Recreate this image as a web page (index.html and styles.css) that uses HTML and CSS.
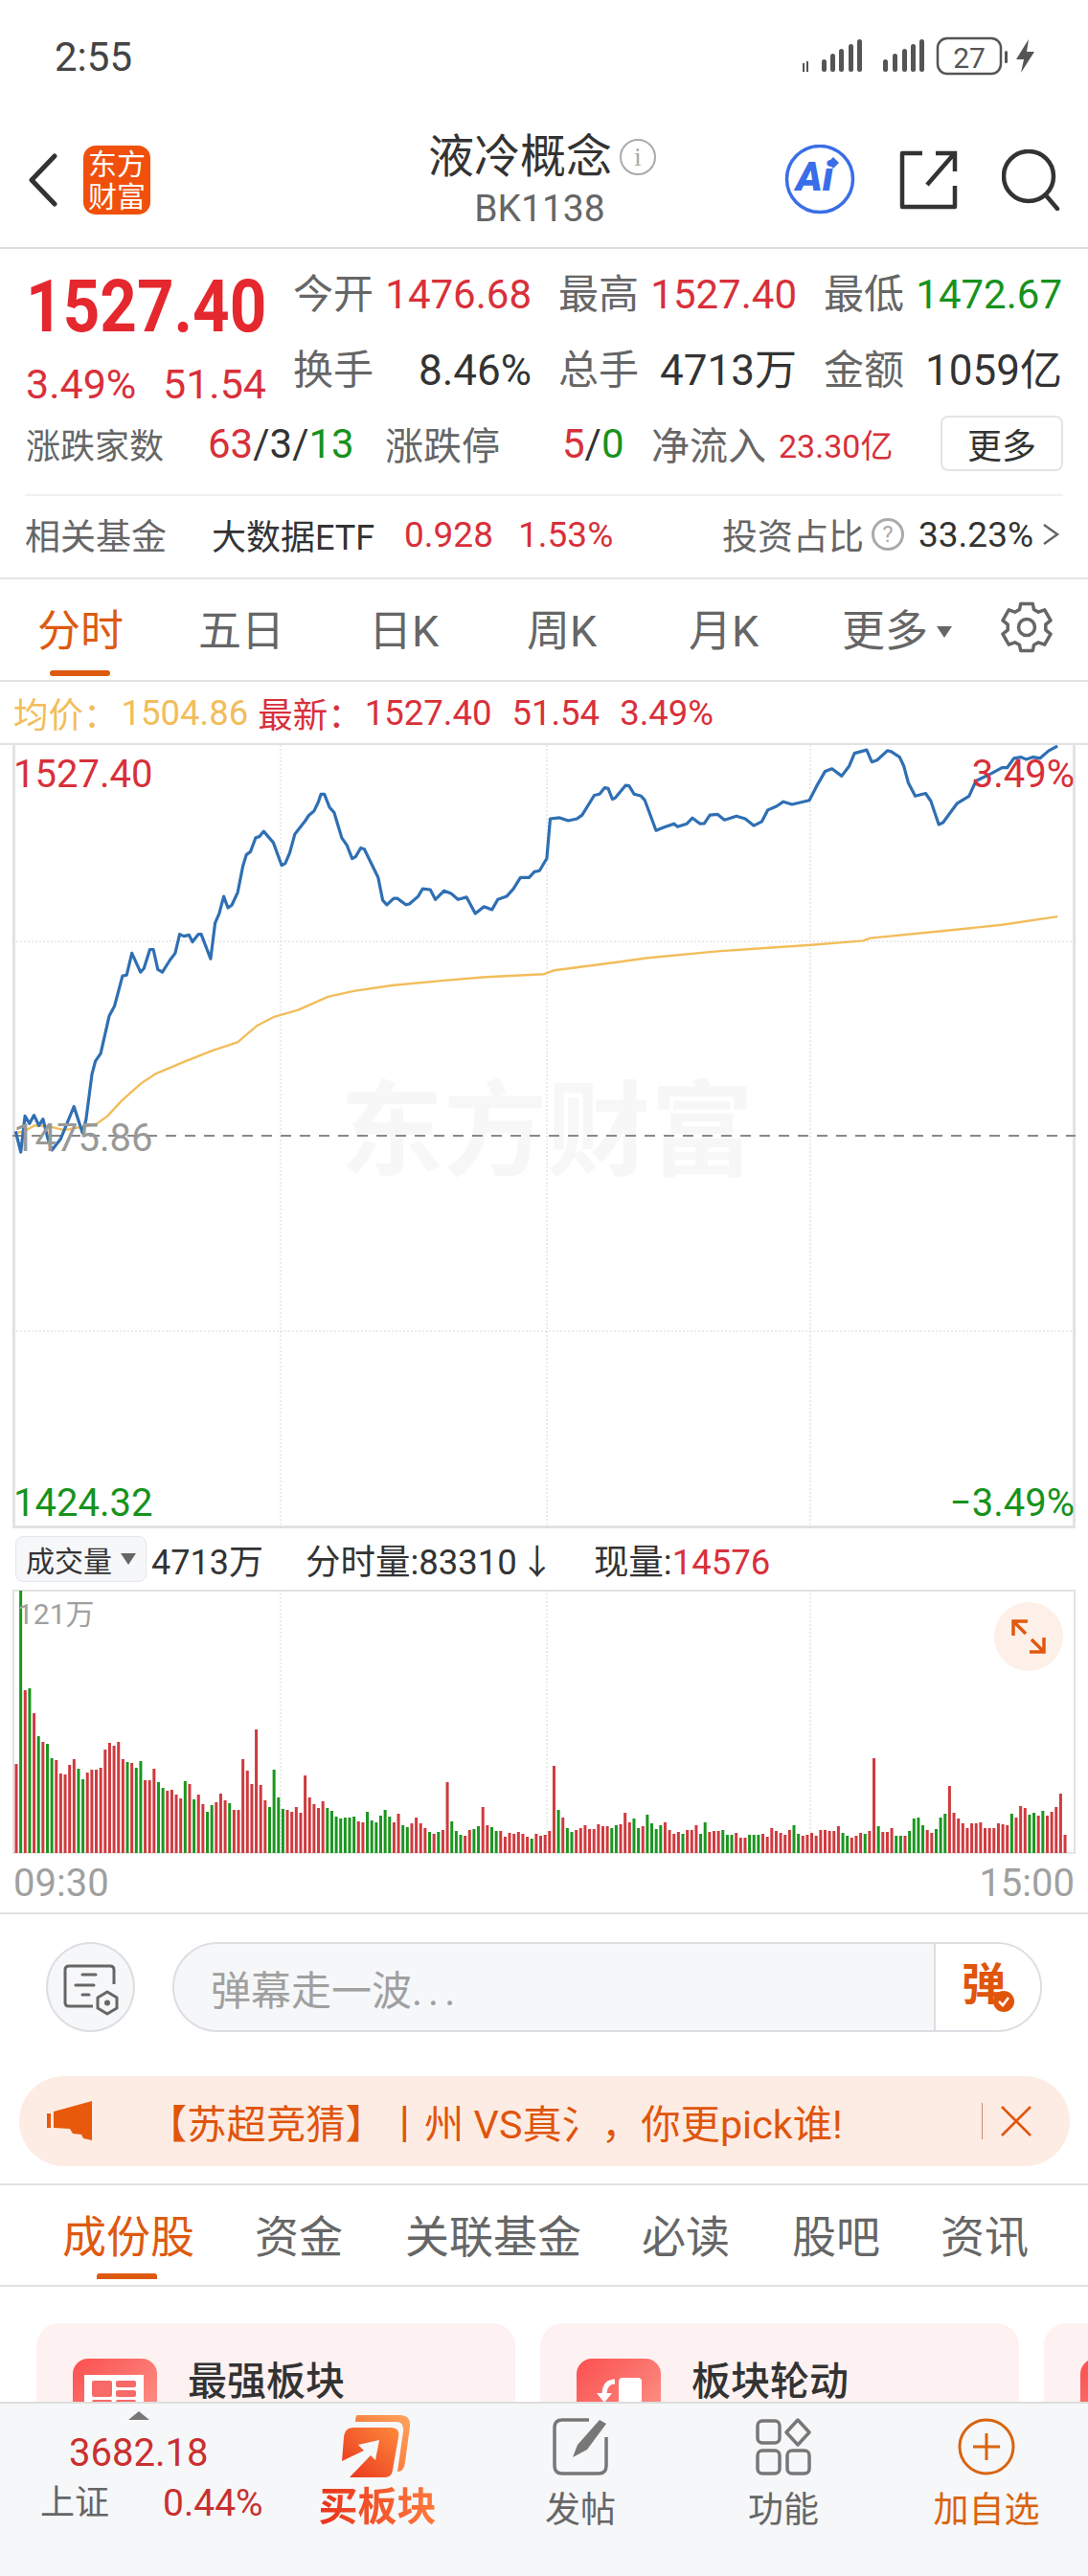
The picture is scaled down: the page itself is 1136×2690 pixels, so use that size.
FILE: index.html
```html
<!DOCTYPE html>
<html lang="zh-CN">
<head>
  <meta charset="UTF-8">
  <title>液冷概念 BK1138</title>
  <link rel="stylesheet" href="styles.css">
</head>
<body>

  <div class="statusbar">
    <span class="clock">2:55</span>
    <svg class="status-icons" width="243" height="42" viewBox="837 38 243 42">
      <g fill="#555">
        <rect x="838" y="66" width="2" height="9"/><rect x="842" y="64" width="2" height="11"/>
        <rect x="858" y="62" width="5" height="13" rx="2.5"/><rect x="867" y="56" width="5" height="19" rx="2.5"/>
        <rect x="876" y="51" width="5" height="24" rx="2.5"/><rect x="886" y="46" width="5" height="29" rx="2.5"/>
        <rect x="895" y="41" width="5" height="34" rx="2.5"/>
        <rect x="922" y="62" width="5" height="13" rx="2.5"/><rect x="932" y="56" width="5" height="19" rx="2.5"/>
        <rect x="942" y="51" width="5" height="24" rx="2.5"/><rect x="951" y="46" width="5" height="29" rx="2.5"/>
        <rect x="960" y="41" width="5" height="34" rx="2.5"/>
        <rect x="1049" y="53" width="3" height="13" rx="1.5"/>
        <path d="M1074 41 L1061 62 H1069 L1066 76 L1080 54 H1072 Z"/>
      </g>
      <rect x="979" y="40" width="66" height="37" rx="10" fill="none" stroke="#555" stroke-width="2.5"/>
      <text x="1012" y="71" class="battery-text" text-anchor="middle">27</text>
    </svg>
  </div>

  <div class="navbar">
    <svg class="back" width="31" height="56" viewBox="0 0 31 56"><path d="M28 3 L4 28 L28 53" fill="none" stroke="#333" stroke-width="5" stroke-linecap="round" stroke-linejoin="round"/></svg>
    <div class="logo">东方<br>财富</div>
    <div class="nav-title">
      <div class="title-line"><h1>液冷概念</h1><span class="info-dot">i</span></div>
      <div class="code">BK1138</div>
    </div>
    <svg class="ai" width="74" height="74" viewBox="0 0 74 74">
      <circle cx="37" cy="36" r="34.5" fill="#fff" stroke="#3a6ee8" stroke-width="3.5"/>
      <text x="12" y="48" class="ai-text">Ai</text>
      <path d="M51 13 L57 19 L51 25 L45 19 Z" fill="#3a6ee8"/>
    </svg>
    <svg class="share" width="62" height="62" viewBox="0 0 62 62">
      <path d="M24 3 H3 V59 H58 V37" fill="none" stroke="#333" stroke-width="4.5" stroke-linejoin="round"/>
      <path d="M29 36 L56 5 M38 3 H58 V22" fill="none" stroke="#333" stroke-width="4.5"/>
    </svg>
    <svg class="search" width="62" height="64" viewBox="0 0 62 64">
      <circle cx="28" cy="28" r="26" fill="none" stroke="#333" stroke-width="4.5"/>
      <path d="M46 48 L58 62" stroke="#333" stroke-width="4.5" stroke-linecap="round"/>
    </svg>
  </div>

  <div class="quote">
    <div class="quote-top">
      <div class="price-box">
        <div class="price">1527.40</div>
        <div class="change"><span>3.49%</span><span>51.54</span></div>
      </div>
      <div class="stats">
        <div class="stat"><label>今开</label><span class="up">1476.68</span></div>
        <div class="stat"><label>最高</label><span class="up">1527.40</span></div>
        <div class="stat"><label>最低</label><span class="down">1472.67</span></div>
        <div class="stat wide"><label>换手</label><span>8.46%</span></div>
        <div class="stat wide"><label>总手</label><span>4713万</span></div>
        <div class="stat wide"><label>金额</label><span>1059亿</span></div>
      </div>
    </div>
    <div class="flow-row">
      <label class="w-190">涨跌家数</label>
      <span class="w-185 num"><i class="up">63</i>/3/<i class="down">13</i></span>
      <label class="w-185 big">涨跌停</label>
      <span class="w-93 num"><i class="up">5</i>/<i class="down">0</i></span>
      <label class="w-133 big">净流入</label>
      <span class="w-169 up small">23.30亿</span>
      <button class="more-btn">更多</button>
    </div>
    <div class="fund-row">
      <label class="w-195">相关基金</label>
      <span class="w-201 fund-name">大数据ETF</span>
      <span class="w-119 up">0.928</span>
      <span class="w-213 up">1.53%</span>
      <label>投资占比</label>
      <span class="help-dot">?</span>
      <span class="ratio">33.23%</span>
      <svg class="caret" width="20" height="30" viewBox="0 0 20 30"><path d="M3 5 L17 15 L3 25" fill="none" stroke="#666" stroke-width="2.5"/></svg>
    </div>
  </div>

  <div class="kline-tabs">
    <a class="tab active w-168">分时</a>
    <a class="tab w-178">五日</a>
    <a class="tab w-165">日K</a>
    <a class="tab w-169">周K</a>
    <a class="tab w-160">月K</a>
    <a class="tab w-166">更多<i class="tri"></i></a>
    <svg class="gear" width="54" height="54" viewBox="0 0 54 54">
      <path d="M20.7 2.5 H33.3 L34.5 8.5 L39.3 11.2 L45.7 8.9 L52 19.8 L46.8 24.2 V29.8 L52 34.2 L45.7 45.1 L39.3 42.8 L34.5 45.5 L33.3 51.5 H20.7 L19.5 45.5 L14.7 42.8 L8.3 45.1 L2 34.2 L7.2 29.8 V24.2 L2 19.8 L8.3 8.9 L14.7 11.2 L19.5 8.5 Z" fill="none" stroke="#666" stroke-width="3.5" stroke-linejoin="round"/>
      <circle cx="27" cy="27" r="8.5" fill="none" stroke="#666" stroke-width="3.5"/>
    </svg>
  </div>

  <div class="avg-row">
    <span class="avg">均价：</span><span class="avg val-a">1504.86</span>
    <span class="up val-b">最新：</span><span class="up val-c">1527.40</span>
    <span class="up val-d">51.54</span><span class="up val-e">3.49%</span>
  </div>

  <div class="plot">
    <div class="watermark">东方财富</div>
    <svg id="priceChart" class="chart" width="1110" height="818" viewBox="13 778 1110 818">
      <g class="grid">
        <line x1="293" y1="778" x2="293" y2="1596"/><line x1="571" y1="778" x2="571" y2="1596"/><line x1="846" y1="778" x2="846" y2="1596"/>
        <line x1="13" y1="983" x2="1123" y2="983"/><line x1="13" y1="1390" x2="1123" y2="1390"/>
      </g>
      <line class="prev-close" x1="13" y1="1186" x2="1123" y2="1186"/>
    </svg>
    <span class="plot-label tl up">1527.40</span>
    <span class="plot-label tr up">3.49%</span>
    <span class="plot-label ml grey">1475.86</span>
    <span class="plot-label bl down">1424.32</span>
    <span class="plot-label br down">−3.49%</span>
  </div>

  <div class="vol-row">
    <div class="vol-select">成交量<i class="tri"></i></div>
    <span class="vol-total">4713万</span>
    <span class="vol-min">分时量:83310</span><span class="vol-arrow">↓</span>
    <span class="vol-now">现量:<i class="up">14576</i></span>
  </div>

  <div class="vol-panel">
    <svg id="volChart" class="chart" width="1110" height="276" viewBox="13 1660 1110 276">
      <g class="grid">
        <line x1="293" y1="1660" x2="293" y2="1936"/><line x1="571" y1="1660" x2="571" y2="1936"/><line x1="846" y1="1660" x2="846" y2="1936"/>
      </g>
    </svg>
    <span class="vol-max">121万</span>
    <div class="expand">
      <svg width="36" height="36" viewBox="0 0 36 36" fill="none" stroke="#e05a10" stroke-width="3.5">
        <path d="M2 17 V2 H17 M2 2 L15 15 M34 19 V34 H19 M34 34 L21 21"/>
      </svg>
    </div>
  </div>

  <div class="time-row"><span>09:30</span><span>15:00</span></div>

  <div class="comment-bar">
    <div class="round-btn">
      <svg width="58" height="56" viewBox="0 0 58 56" fill="none" stroke="#666" stroke-width="3">
        <path d="M53 22 V7 Q53 3 49 3 H6 Q2 3 2 7 V41 Q2 45 6 45 H31"/>
        <path d="M20 12 H34 M13 23 H32 M20 33 H27" stroke-linecap="round"/>
        <path d="M46 30 L56 36 V47 L46 53 L36 47 V36 Z" stroke-linejoin="round"/>
        <circle cx="46" cy="41.5" r="3" fill="#666" stroke="none"/>
      </svg>
    </div>
    <div class="danmu-input">
      <span class="placeholder">弹幕走一波<span class="dots">...</span></span>
      <div class="danmu-send">
        <b>弹</b>
        <svg class="danmu-check" width="24" height="24" viewBox="0 0 24 24"><circle cx="12" cy="12" r="11" fill="#e0550c"/><path d="M7 12 L11 16 L17 8" fill="none" stroke="#fff" stroke-width="2.5"/></svg>
      </div>
    </div>
  </div>

  <div class="notice">
    <svg class="horn" width="48" height="42" viewBox="0 0 48 42" fill="#e8590c">
      <rect x="0" y="13" width="4" height="15"/>
      <path d="M7 11 L47 0 V41 L38 39 L36 35 L27 34 L24 29 L7 28 Z"/>
    </svg>
    <span class="notice-text">【苏超竞猜】丨州 VS真氵，你更pick谁!</span>
    <span class="notice-sep"></span>
    <svg class="notice-close" width="34" height="34" viewBox="0 0 34 34"><path d="M2 2 L32 32 M32 2 L2 32" stroke="#e0550c" stroke-width="2.5"/></svg>
  </div>

  <div class="info-tabs">
    <a class="info-tab active w-201">成份股</a>
    <a class="info-tab w-157">资金</a>
    <a class="info-tab w-247">关联基金</a>
    <a class="info-tab w-157">必读</a>
    <a class="info-tab w-155">股吧</a>
    <a class="info-tab">资讯</a>
  </div>

  <div class="cards">
    <div class="card">
      <div class="card-icon">
        <div class="sheet"><i></i><i></i><i></i><i></i><i></i></div>
      </div>
      <div class="card-title">最强板块</div>
    </div>
    <div class="card">
      <div class="card-icon">
        <svg width="88" height="88" viewBox="0 0 88 88">
          <rect x="44" y="20" width="24" height="34" rx="4" fill="#fff"/>
          <path d="M40 24 Q30 24 29 36 V40" fill="none" stroke="#fff" stroke-width="5"/>
          <path d="M21 36 H37 L29 46 Z" fill="#fff"/>
        </svg>
      </div>
      <div class="card-title">板块轮动</div>
    </div>
    <div class="card card-peek">
      <div class="card-icon"></div>
    </div>
  </div>

  <div class="tabbar">
    <div class="index-cell">
      <i class="index-tri"></i>
      <div class="index-val">3682.18</div>
      <div class="index-foot"><label>上证</label><span>0.44%</span></div>
    </div>
    <div class="bar-cell">
      <svg class="bar-icon" width="76" height="68" viewBox="0 0 76 68">
        <defs>
          <linearGradient id="buyFront" x1="0" y1="1" x2="1" y2="0"><stop offset="0" stop-color="#e8331c"/><stop offset="1" stop-color="#ff8a3c"/></linearGradient>
          <linearGradient id="buyBack" x1="0" y1="1" x2="1" y2="0"><stop offset="0" stop-color="#f4642c"/><stop offset="1" stop-color="#ffa45c"/></linearGradient>
        </defs>
        <path d="M17 1 H62 Q73 1 72 13 L67 50 Q66 60 59 60 L65 18 Q66 8 58 8 H15 Q15 2 17 1 Z" fill="url(#buyBack)"/>
        <path d="M3 24 Q4 14 13 14 H52 Q62 14 60 24 L54 58 Q53 66 46 66 H9 L31 43 L36 48 L40 27 L18 32 L24 38 L1 49 Z" fill="url(#buyFront)"/>
      </svg>
      <span class="bar-label buy">买板块</span>
    </div>
    <div class="bar-cell">
      <svg class="bar-icon" width="58" height="60" viewBox="0 0 58 60" fill="none" stroke="#777" stroke-width="3.5">
        <path d="M38 2 H10 Q2 2 2 10 V50 Q2 58 10 58 H48 Q56 58 56 50 V20" stroke-linejoin="round"/>
        <path d="M21 41 L26 28 L49 2 L56 6 L36 33 Z" fill="#777" stroke="none"/>
      </svg>
      <span class="bar-label">发帖</span>
    </div>
    <div class="bar-cell">
      <svg class="bar-icon" width="58" height="60" viewBox="0 0 58 60" fill="none" stroke="#777" stroke-width="3.5">
        <rect x="2" y="3" width="23" height="23" rx="5"/>
        <path d="M44 2 L56 15 L44 28 L32 15 Z" stroke-linejoin="round"/>
        <rect x="2" y="34" width="23" height="24" rx="5"/>
        <rect x="33" y="34" width="23" height="24" rx="5"/>
      </svg>
      <span class="bar-label">功能</span>
    </div>
    <div class="bar-cell">
      <svg class="bar-icon" width="60" height="60" viewBox="0 0 60 60" fill="none" stroke="#d9640f" stroke-width="3">
        <circle cx="30" cy="30" r="28"/>
        <path d="M30 16 V44 M16 30 H44"/>
      </svg>
      <span class="bar-label add">加自选</span>
    </div>
  </div>

  <script src="chart.js"></script>
</body>
</html>
```

FILE: styles.css
```css
:root {
  --up: #d8303a;
  --down: #17921d;
  --orange: #dd5a10;
  --label: #666;
  --text: #333;
  --line: #e2e2e2;
}
* {
  margin: 0;
  padding: 0;
  box-sizing: border-box;
}
body {
  width: 1136px;
  height: 2690px;
  overflow: hidden;
  display: flex;
  flex-direction: column;
  background: #fff;
  color: var(--text);
  font-family: Roboto, "Noto Sans CJK SC", sans-serif;
  font-size: 40px;
}
i {
  font-style: normal;
}
label {
  color: var(--label);
}
.up { color: var(--up); }
.down { color: var(--down); }
.grey { color: #999; }

/* fixed column widths for the rows that line up by hand */
.w-93 { width: 93px; }
.w-119 { width: 119px; }
.w-133 { width: 133px; }
.w-155 { width: 155px; }
.w-157 { width: 157px; }
.w-160 { width: 160px; }
.w-165 { width: 165px; }
.w-166 { width: 166px; }
.w-168 { width: 168px; }
.w-169 { width: 169px; }
.w-178 { width: 178px; }
.w-185 { width: 185px; }
.w-190 { width: 190px; }
.w-195 { width: 195px; }
.w-201 { width: 201px; }
.w-213 { width: 213px; }
.w-247 { width: 247px; }

/* status bar */
.statusbar {
  height: 120px;
  flex: none;
  display: flex;
  justify-content: space-between;
  padding: 38px 56px 0 57px;
}
.clock {
  font-size: 42px;
  line-height: 44px;
  color: #444;
}
.battery-text {
  font-size: 30px;
  fill: #555;
}

/* top nav */
.navbar {
  height: 140px;
  flex: none;
  display: flex;
  align-items: flex-start;
  padding-left: 29px;
  border-bottom: 2px solid #ddd;
}
.back {
  margin-top: 40px;
}
.logo {
  width: 70px;
  height: 72px;
  margin: 32px 0 0 27px;
  background: #f0500c;
  border-radius: 13px;
  color: #fff;
  font-size: 30px;
  line-height: 34px;
  text-align: center;
  padding-top: 3px;
}
.nav-title {
  width: 240px;
  margin: 14px 0 0 289px;
  display: flex;
  flex-direction: column;
  align-items: center;
}
.title-line {
  display: flex;
  align-items: center;
  gap: 8px;
}
.nav-title h1 {
  font-size: 48px;
  font-weight: 400;
  line-height: 60px;
  color: var(--text);
}
.info-dot {
  width: 38px;
  height: 38px;
  border: 2px solid #aaa;
  border-radius: 50%;
  color: #aaa;
  font-family: "Liberation Serif", serif;
  font-size: 28px;
  line-height: 34px;
  text-align: center;
}
.code {
  font-size: 39px;
  line-height: 44px;
  margin-top: 2px;
  padding-right: 5px;
  color: #666;
}
.ai {
  margin: 31px 0 0 133px;
}
.ai-text {
  font-size: 42px;
  font-weight: 900;
  font-style: italic;
  fill: #3a6ee8;
}
.share {
  margin: 37px 0 0 46px;
}
.search {
  margin: 36px 0 0 45px;
}

/* quote block */
.quote {
  height: 345px;
  flex: none;
  border-bottom: 2px solid #e4e4e4;
}
.quote-top {
  height: 174px;
  display: flex;
  padding-top: 22px;
}
.price-box {
  width: 306px;
  padding-left: 27px;
}
.price {
  font-size: 76px;
  font-weight: 700;
  line-height: 76px;
  color: #e5272e;
  transform: scaleX(0.886);
  transform-origin: left center;
}
.change {
  width: 251px;
  display: flex;
  justify-content: space-between;
  margin-top: 18px;
  font-size: 43px;
  line-height: 50px;
  color: var(--up);
}
.stats {
  display: grid;
  grid-template-columns: repeat(3, 249px);
  column-gap: 28px;
  row-gap: 29px;
  grid-auto-rows: 50px;
  padding-top: 1px;
}
.stat {
  display: flex;
  justify-content: space-between;
  align-items: center;
  font-size: 42px;
  line-height: 50px;
}
.stat.wide span {
  font-size: 44px;
}
.flow-row {
  height: 58px;
  display: flex;
  align-items: center;
  padding-left: 27px;
  font-size: 36px;
}
.flow-row .big {
  font-size: 40px;
}
.flow-row .num {
  font-size: 42px;
}
.flow-row .small {
  font-size: 34px;
}
.more-btn {
  width: 128px;
  height: 58px;
  border: 2px solid #e4e4e4;
  border-radius: 8px;
  background: #fff;
  color: var(--text);
  font-family: inherit;
  font-size: 36px;
}
.fund-row {
  height: 88px;
  margin: 24px 26px 0 26px;
  padding-bottom: 6px;
  border-top: 2px solid #f0f0f0;
  display: flex;
  align-items: center;
  font-size: 37px;
}
.fund-name {
  font-size: 36px;
}
.help-dot {
  width: 34px;
  height: 34px;
  margin: 0 15px 0 8px;
  border: 3px solid #aaa;
  border-radius: 50%;
  color: #aaa;
  font-size: 24px;
  line-height: 28px;
  text-align: center;
}
.caret {
  margin-left: 8px;
}

/* period tabs */
.kline-tabs {
  height: 107px;
  flex: none;
  display: flex;
  align-items: center;
  padding: 4px 0 0 39px;
  border-bottom: 2px solid #e2e2e2;
}
.tab {
  position: relative;
  font-size: 45px;
  line-height: 60px;
  color: #666;
  display: flex;
  align-items: center;
}
.tab.active {
  color: var(--orange);
}
/* underline of the selected period */
.tab.active::after {
  content: "";
  position: absolute;
  left: 13px;
  bottom: -16px;
  width: 63px;
  height: 6px;
  border-radius: 3px;
  background: var(--orange);
}
.tri {
  width: 0;
  height: 0;
  margin-left: 9px;
  border-left: 8px solid transparent;
  border-right: 8px solid transparent;
  border-top: 12px solid #666;
}
.gear {
  margin-top: -10px;
}

.avg-row {
  height: 66px;
  flex: none;
  display: flex;
  align-items: center;
  padding-left: 14px;
  border-bottom: 2px solid #e2e2e2;
  font-size: 36.5px;
}
.avg {
  color: #f2bd5b;
}
.val-a { margin-left: 3px; }
.val-b { margin-left: 10px; }
.val-c { margin-left: 2px; }
.val-d { margin-left: 21px; }
.val-e { margin-left: 21px; }

/* price chart */
.plot {
  position: relative;
  height: 818px;
  flex: none;
  margin: 0 13px;
  box-shadow: inset 3px 0 #e2e2e2, inset -3px 0 #e2e2e2, inset 0 -3px #e2e2e2;
}
.chart {
  position: absolute;
  top: 0;
  left: 0;
}
.grid line {
  stroke: #d8d8d8;
  stroke-width: 1;
  stroke-dasharray: 2 2;
}
.prev-close {
  stroke: #888;
  stroke-width: 2;
  stroke-dasharray: 11 9;
}
.watermark {
  position: absolute;
  left: 342px;
  top: 344px;
  font-size: 108px;
  font-weight: 700;
  line-height: 120px;
  color: #f7f7f7;
  white-space: nowrap;
}
.plot-label {
  position: absolute;
  font-size: 40px;
  line-height: 40px;
}
.tl { left: 1px; top: 11px; }
.tr { right: 1px; top: 11px; }
.ml { left: 1px; top: 391px; }
.bl { left: 1px; top: 772px; }
.br { right: 1px; top: 772px; }

/* volume */
.vol-row {
  height: 64px;
  flex: none;
  display: flex;
  align-items: center;
  padding-left: 16px;
  font-size: 36px;
}
.vol-select {
  width: 137px;
  height: 48px;
  display: flex;
  align-items: center;
  padding-left: 10px;
  background: #f6f7f9;
  border: 1px solid #e4e6ea;
  border-radius: 8px;
  font-size: 30px;
}
.vol-select .tri {
  margin-left: 9px;
}
.vol-total { margin-left: 5px; }
.vol-min { margin-left: 44px; font-size: 36.5px; }
.vol-arrow { margin-left: 3px; }
.vol-now { margin-left: 41px; font-size: 36.5px; }
.vol-panel {
  position: relative;
  height: 276px;
  flex: none;
  margin: 0 13px;
  box-shadow: inset 2px 0 #e2e2e2, inset -2px 0 #e2e2e2, inset 0 2px #e2e2e2, inset 0 -2px #e8e8e8;
}
.vol-max {
  position: absolute;
  left: 5px;
  top: 8px;
  font-size: 30px;
  line-height: 36px;
  color: #a0a0a0;
}
.expand {
  position: absolute;
  right: 13px;
  top: 13px;
  width: 72px;
  height: 72px;
  border-radius: 50%;
  background: #fdf0e8;
  display: flex;
  align-items: center;
  justify-content: center;
}
.time-row {
  height: 63px;
  flex: none;
  display: flex;
  justify-content: space-between;
  padding: 0 14px;
  align-items: center;
  font-size: 40px;
  color: #a0a0a0;
  border-bottom: 2px solid #e2e2e2;
}

/* danmu input */
.comment-bar {
  height: 169px;
  flex: none;
  display: flex;
  padding: 29px 48px 0;
  gap: 39px;
}
.round-btn {
  width: 93px;
  height: 94px;
  border: 2px solid #dcdee2;
  border-radius: 50%;
  background: #f6f7f9;
  display: flex;
  align-items: center;
  justify-content: center;
}
.round-btn svg {
  margin-top: 6px;
}
.danmu-input {
  width: 908px;
  height: 94px;
  border: 2px solid #dcdee2;
  border-radius: 47px;
  background: #f6f7f9;
  display: flex;
  align-items: center;
  justify-content: space-between;
  padding-left: 38px;
}
.placeholder {
  font-size: 42px;
  color: #a0a0a0;
}
.dots {
  letter-spacing: 6px;
}
.danmu-send {
  position: relative;
  width: 111px;
  height: 90px;
  background: #fff;
  border-left: 2px solid #dcdee2;
  border-radius: 0 45px 45px 0;
  padding: 14px 0 0 27px;
}
.danmu-send b {
  font-size: 46px;
  line-height: 56px;
  color: #e0550c;
}
.danmu-check {
  position: absolute;
  left: 59px;
  top: 48px;
}

/* notice strip */
.notice {
  height: 94px;
  flex: none;
  margin: 0 19px 0 20px;
  display: flex;
  align-items: center;
  padding-left: 29px;
  background: #fdece4;
  border-radius: 47px;
}
.notice-text {
  width: 928px;
  padding-left: 57px;
  font-size: 41.3px;
  color: #e0550c;
  white-space: nowrap;
}
.notice-sep {
  width: 1px;
  height: 38px;
  background: #c98a6a;
}
.notice-close {
  margin-left: 18px;
}

/* info tabs */
.info-tabs {
  height: 108px;
  flex: none;
  margin-top: 18px;
  display: flex;
  align-items: center;
  padding: 4px 0 0 65px;
  border-top: 2px solid #e2e2e2;
  border-bottom: 2px solid #e2e2e2;
}
.info-tab {
  position: relative;
  font-size: 46px;
  line-height: 60px;
  color: #666;
}
.info-tab.active {
  color: var(--orange);
}
.info-tab.active::after {
  content: "";
  position: absolute;
  left: 36px;
  bottom: -14px;
  width: 63px;
  height: 6px;
  border-radius: 3px 3px 0 0;
  background: var(--orange);
}

/* feature cards, they run on underneath the tab bar */
.cards {
  height: 120px;
  flex: none;
  display: flex;
  gap: 26px;
  padding: 38px 0 0 38px;
}
.card {
  width: 500px;
  height: 200px;
  flex: none;
  display: flex;
  align-items: flex-start;
  padding: 37px 0 0 38px;
  background: #fdf1f1;
  border-radius: 24px;
}
/* only the edge of the next card shows in the row */
.card-peek {
  width: 47px;
  overflow: hidden;
  border-radius: 24px 0 0 24px;
}
.card-icon {
  width: 88px;
  height: 88px;
  flex: none;
  border-radius: 16px;
  background: linear-gradient(135deg, #fb4f4f, #fc9f92);
}
.sheet {
  width: 62px;
  height: 60px;
  margin: 17px 0 0 12px;
  padding: 6px 8px;
  background: #fff;
  display: grid;
  grid-template-columns: 21px 21px;
  grid-template-rows: 7px 7px 14px;
  column-gap: 4px;
  row-gap: 3px;
}
.sheet i {
  border-radius: 2px;
  background: #f76a68;
}
.sheet i:first-child {
  grid-row: span 2;
}
.card-title {
  margin: 4px 0 0 32px;
  font-size: 41px;
  font-weight: 500;
  line-height: 40px;
  color: var(--text);
}

/* bottom tab bar */
.tabbar {
  position: relative;
  z-index: 1;
  height: 182px;
  flex: none;
  display: flex;
  background: #f6f7f9;
  border-top: 2px solid #ddd;
}
.index-cell {
  width: 288px;
  padding-left: 42px;
}
.index-tri {
  display: block;
  width: 0;
  height: 0;
  margin: 8px 0 0 92px;
  border-left: 11px solid transparent;
  border-right: 11px solid transparent;
  border-bottom: 9px solid #777;
}
.index-val {
  margin: 13px 0 0 30px;
  font-size: 40px;
  line-height: 44px;
  color: #c9302f;
}
.index-foot {
  display: flex;
  align-items: center;
  gap: 56px;
  margin-top: 7px;
  font-size: 36px;
  line-height: 46px;
}
.index-foot span {
  font-size: 39px;
  color: #c9302f;
}
.bar-cell {
  width: 212px;
  display: flex;
  flex-direction: column;
  align-items: center;
  padding-top: 11px;
}
.bar-icon {
  height: 68px;
}
.bar-label {
  margin-top: 10px;
  font-size: 37px;
  line-height: 46px;
  color: #666;
}
.bar-label.buy {
  margin-top: 6px;
  font-size: 41px;
  font-weight: 700;
  background: linear-gradient(90deg, #e8331c, #ff7a3c);
  -webkit-background-clip: text;
  background-clip: text;
  color: transparent;
}
.bar-label.add {
  color: #d9640f;
}
```

FILE: chart.js
```js
// Intraday series. Coordinates are in half-width chart units: 1568 units across
// each half of the screen, vertical units start at the page's y=600.
const UNIT_X = 568 / 1568;
const UNIT_Y = 620 / 1568;
const SVG_NS = 'http://www.w3.org/2000/svg';

const priceLeft = [45,1470,60,1525,72,1430,85,1450,98,1428,112,1455,124,1438,138,1490,150,1520,175,1490,213,1405,238,1475,248,1440,265,1320,275,1285,290,1265,315,1165,330,1140,353,1060,365,1058,380,1000,405,1050,415,1040,432,990,442,990,455,1043,468,1050,490,1018,505,1000,518,950,530,955,545,952,555,970,572,950,580,950,607,1015,620,920,632,895,645,850,657,880,668,873,685,840,700,770,710,740,722,732,737,695,748,692,760,678,788,708,812,768,822,763,835,735,850,685,880,650,890,636,905,625,918,600,925,580,935,580,950,615,963,628,985,695,1000,715,1015,750,1025,745,1040,722,1050,725,1090,800,1103,860,1115,872,1135,855,1145,855,1170,872,1180,870,1205,850,1218,830,1240,832,1255,858,1280,835,1300,842,1320,858,1345,852,1370,895,1395,877,1418,885,1435,858,1460,850,1480,830,1500,800,1525,800,1540,785,1555,782];
const priceRight = [0,762,8,750,18,645,45,642,70,650,95,645,110,635,145,583,160,580,175,563,185,565,197,593,205,590,235,557,245,558,260,580,280,585,290,595,323,676,345,668,375,658,385,666,412,658,428,643,450,658,462,657,478,635,500,633,520,648,555,638,580,645,605,663,628,652,645,622,670,612,690,600,715,607,765,596,785,560,810,520,830,513,858,532,880,505,895,472,930,463,945,495,960,490,990,465,1000,467,1025,482,1037,505,1050,550,1070,585,1100,578,1115,598,1138,660,1150,655,1190,605,1225,585,1245,545,1290,525,1320,510,1335,510,1355,485,1375,482,1390,488,1410,482,1430,485,1455,465,1480,453];
const avgLeft = [45,1475,70,1470,100,1455,140,1457,185,1467,240,1458,280,1450,310,1430,350,1390,405,1345,450,1318,530,1287,610,1258,685,1235,740,1192,790,1168,860,1150,945,1115,1020,1100,1130,1085,1280,1072,1400,1063,1568,1055];
const avgRight = [30,1045,200,1025,300,1012,500,995,770,978,920,967,940,960,1140,942,1320,925,1480,903];

// Volume per minute in bar pixels; negative means the minute closed down.
const volumes = [93,-274,170,-172,146,-122,116,-114,-99,97,83,82,92,98,-88,-77,84,87,87,89,108,115,112,116,98,-95,94,-89,-96,76,76,88,-74,-68,65,66,61,57,-75,72,-56,61,51,-43,-50,53,62,55,-52,45,45,98,86,72,129,71,55,-48,-87,-58,-46,45,43,48,42,81,58,51,47,54,-47,-44,-38,-36,-37,-37,-38,33,32,-43,-34,-32,-39,-45,-38,32,41,-29,-27,31,37,31,26,-22,20,-22,24,74,-33,-23,-19,18,24,-25,-28,48,29,-27,-23,23,17,21,20,22,20,17,-15,20,18,19,
  23,91,-45,37,-26,-22,24,26,29,25,25,30,28,28,-26,-29,30,42,32,-36,-26,28,-40,-31,-25,-29,32,24,20,22,-20,24,24,29,-20,-32,22,23,23,-24,-19,-19,21,16,16,-19,-19,-19,20,17,26,23,21,19,24,-29,-20,18,19,21,18,24,24,23,23,28,-21,-18,16,18,21,-20,23,99,-28,22,22,26,-18,-18,18,-23,-36,-37,-29,24,21,-25,-37,-41,70,42,36,31,26,31,31,32,26,26,26,31,30,29,-41,37,49,47,-40,-42,39,-44,39,43,48,62,19];

function toPoints(left, right) {
  const pts = [];
  for (let i = 0; i < left.length; i += 2) {
    pts.push((left[i] * UNIT_X).toFixed(1) + ',' + (600 + left[i + 1] * UNIT_Y).toFixed(1));
  }
  for (let i = 0; i < right.length; i += 2) {
    pts.push((568 + right[i] * UNIT_X).toFixed(1) + ',' + (600 + right[i + 1] * UNIT_Y).toFixed(1));
  }
  return pts.join(' ');
}

function addLine(svg, points, color, width) {
  const line = document.createElementNS(SVG_NS, 'polyline');
  line.setAttribute('points', points);
  line.setAttribute('fill', 'none');
  line.setAttribute('stroke', color);
  line.setAttribute('stroke-width', width);
  line.setAttribute('stroke-linejoin', 'round');
  svg.appendChild(line);
}

function addBars(svg) {
  const baseY = 1935;
  volumes.forEach((v, i) => {
    const h = Math.abs(v);
    const bar = document.createElementNS(SVG_NS, 'rect');
    bar.setAttribute('x', (15.5 + i * 4.64).toFixed(2));
    bar.setAttribute('y', baseY - h);
    bar.setAttribute('width', 3);
    bar.setAttribute('height', h);
    bar.setAttribute('fill', v < 0 ? '#1a961e' : '#cf3a3e');
    svg.appendChild(bar);
  });
}

const priceChart = document.getElementById('priceChart');
addLine(priceChart, toPoints(avgLeft, avgRight), '#f2bd5b', 2.4);
addLine(priceChart, toPoints(priceLeft, priceRight), '#2f6fb3', 3.2);
addBars(document.getElementById('volChart'));
```
